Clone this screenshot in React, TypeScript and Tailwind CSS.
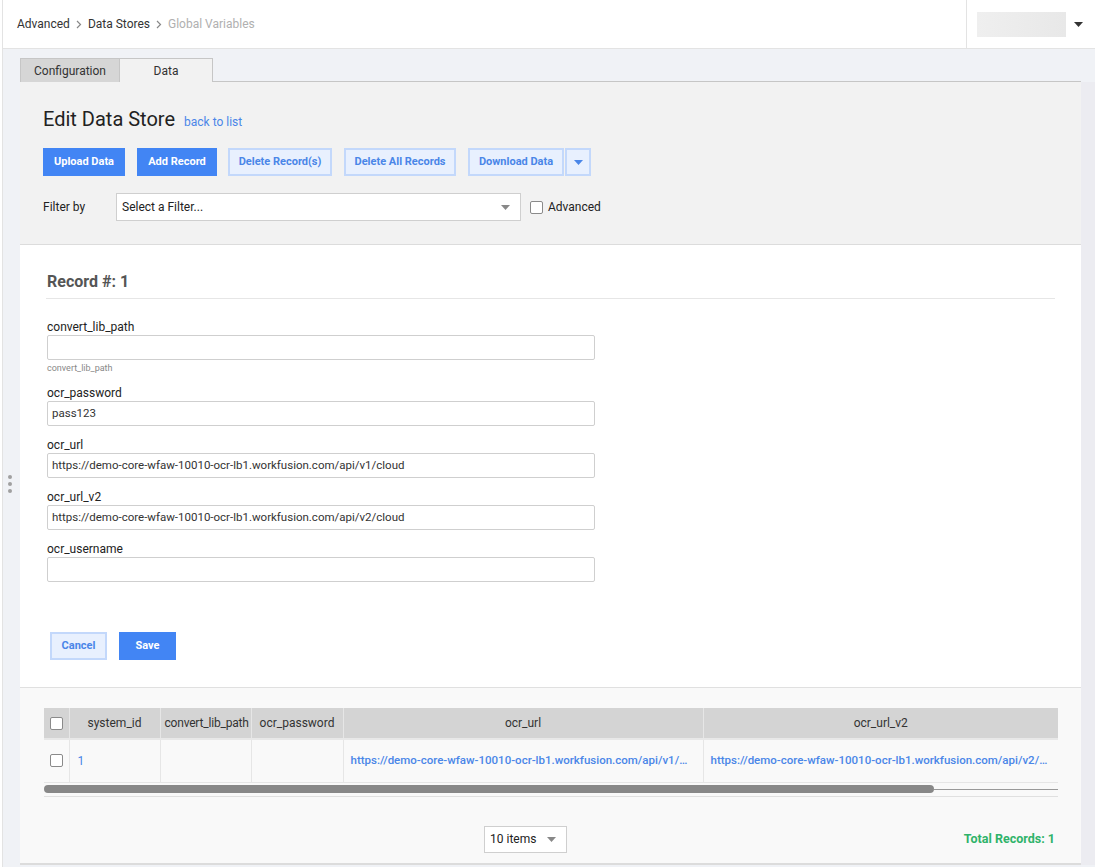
import React from 'react'

const fields = [
  { name: 'convert_lib_path', value: '', hint: 'convert_lib_path' },
  { name: 'ocr_password', value: 'pass123' },
  { name: 'ocr_url', value: 'https://demo-core-wfaw-10010-ocr-lb1.workfusion.com/api/v1/cloud' },
  { name: 'ocr_url_v2', value: 'https://demo-core-wfaw-10010-ocr-lb1.workfusion.com/api/v2/cloud' },
  { name: 'ocr_username', value: '' },
]

function Chevron() {
  return (
    <svg width="6" height="9" viewBox="0 0 6 9" className="mx-[6px] shrink-0">
      <path d="M1 1l3.5 3.5L1 8" fill="none" stroke="#888" strokeWidth="1.2" />
    </svg>
  )
}

function Caret({ color = '#888' }: { color?: string }) {
  return (
    <svg width="9" height="5" viewBox="0 0 9 5" className="shrink-0 block">
      <path d="M0 0h9L4.5 5z" fill={color} />
    </svg>
  )
}

function Box() {
  return <span className="block w-[13px] h-[13px] border border-[#8a8a8a] bg-white rounded-[2px]" />
}

const primary = 'h-[28px] bg-[#4285f4] text-white text-[11px] font-bold whitespace-nowrap shrink-0'
const light = 'h-[28px] bg-[#e8f0fe] text-[#4a86e8] text-[11px] font-bold whitespace-nowrap border-2 border-[#c3d8fb] shrink-0'

export default function App() {
  return (
    <div className="w-[1095px] h-[867px] overflow-hidden bg-white font-['Roboto',sans-serif] text-[#222]">
      <div className="ml-[2px] h-full border-l border-[#e3e3e3] bg-[#f0f2f6]">
        {/* top bar */}
        <header className="h-[49px] bg-white border-b border-[#e3e3e3] flex">
          <div className="flex-1 flex items-center pl-[14px] text-[12px]">
            <span className="text-[#333]">Advanced</span>
            <Chevron />
            <span className="text-[#333]">Data Stores</span>
            <Chevron />
            <span className="text-[#b0b0b0]">Global Variables</span>
          </div>
          <div className="w-[129px] border-l border-[#e3e3e3] flex items-center pl-[10px]">
            <div className="w-[89px] h-[25px] bg-gradient-to-r from-[#efefef] to-[#e8e8e8]" />
            <span className="ml-[8px]"><Caret color="#333" /></span>
          </div>
        </header>

        <div className="flex">
          <div className="w-[17px] relative">
            <div className="absolute left-[5px] top-[426px] flex flex-col gap-[3px]">
              <span className="w-[4px] h-[4px] rounded-full bg-[#a0a0a0]" />
              <span className="w-[4px] h-[4px] rounded-full bg-[#a0a0a0]" />
              <span className="w-[4px] h-[4px] rounded-full bg-[#a0a0a0]" />
            </div>
          </div>

          <div className="w-[1061px] pt-[9px]">
            {/* tabs */}
            <div className="flex h-[24px] text-[12px]">
              <div className="w-[100px] bg-[#d6d6d6] border border-b-0 border-[#c6c6c6] flex items-center justify-center text-[#333]">Configuration</div>
              <div className="w-[93px] bg-[#f2f2f2] border-t border-r border-[#c6c6c6] flex items-center justify-center text-[#333]">Data</div>
              <div className="flex-1 border-b border-[#c6c6c6]" />
            </div>

            {/* top section */}
            <section className="bg-[#f2f2f2] border-b border-[#dcdcdc] pt-[25px] pb-[23px] pl-[23px]">
              <div className="flex items-baseline gap-[9px]">
                <h1 className="text-[20px] leading-[24px] text-[#222]">Edit Data Store</h1>
                <span className="text-[12px] text-[#4a86e8]">back to list</span>
              </div>
              <div className="flex mt-[17px]">
                <button className={primary + ' w-[82px]'}>Upload Data</button>
                <button className={primary + ' w-[80px] ml-[12px]'}>Add Record</button>
                <button className={light + ' w-[104px] ml-[11px]'}>Delete Record(s)</button>
                <button className={light + ' w-[112px] ml-[12px]'}>Delete All Records</button>
                <button className={light + ' w-[96px] ml-[12px]'}>Download Data</button>
                <button className={light + ' w-[26px] ml-[1px] flex items-center justify-center'}><Caret color="#4a86e8" /></button>
              </div>
              <div className="flex items-center mt-[17px] text-[12px]">
                <span className="w-[73px] text-[#222]">Filter by</span>
                <div className="w-[405px] h-[28px] bg-white border border-[#cfcfcf] flex items-center justify-between pl-[5px] pr-[10px]">
                  <span>Select a Filter...</span>
                  <Caret />
                </div>
                <label className="flex items-center ml-[9px] gap-[5px]">
                  <Box />
                  <span>Advanced</span>
                </label>
              </div>
            </section>

            {/* record form */}
            <section className="bg-white pt-[25px] pb-[27px] px-[26px]">
              <h2 className="text-[16px] font-bold text-[#555] pl-[1px] pb-[4px] border-b border-[#e6e6e6]">Record #: 1</h2>
              <div className="w-[549px] pt-[20px] pl-[1px]">
                {fields.map(f => (
                  <div key={f.name} className="mb-[11px]">
                    <div className="text-[12px] leading-[16px]">{f.name}</div>
                    <div className="h-[25px] border border-[#cfcfcf] rounded-[2px] flex items-center px-[4px] text-[11.5px] text-[#333] whitespace-nowrap">{f.value}</div>
                    {f.hint && <div className="text-[9px] leading-[12px] mt-[2px] text-[#888] mb-[2px]">{f.hint}</div>}
                  </div>
                ))}
              </div>
              <div className="flex gap-[12px] mt-[50px] ml-[4px]">
                <button className={light + ' w-[57px]'}>Cancel</button>
                <button className={primary + ' w-[57px]'}>Save</button>
              </div>
            </section>

            {/* table */}
            <section className="bg-[#f9f9f9] border-t border-[#e0e0e0] pt-[20px] pl-[24px] pr-[23px] h-[178px] border-b-2 border-b-[#dcdcdc]">
              <table className="w-[1014px] table-fixed border-collapse text-[12px]">
                <colgroup>
                  <col className="w-[25px]" />
                  <col className="w-[91px]" />
                  <col className="w-[91px]" />
                  <col className="w-[92px]" />
                  <col className="w-[360px]" />
                  <col className="w-[355px]" />
                </colgroup>
                <thead>
                  <tr className="h-[31px] bg-[#d4d4d4] text-[#333] border-b-2 border-[#e8e8e8]">
                    <th className="border-r border-[#e6e6e6] pl-[6px]"><Box /></th>
                    <th className="font-normal border-r border-[#e6e6e6]">system_id</th>
                    <th className="font-normal border-r border-[#e6e6e6] text-left pl-[4px] whitespace-nowrap overflow-hidden tracking-[-0.2px]">convert_lib_path</th>
                    <th className="font-normal border-r border-[#e6e6e6]">ocr_password</th>
                    <th className="font-normal border-r border-[#e6e6e6]">ocr_url</th>
                    <th className="font-normal">ocr_url_v2</th>
                  </tr>
                </thead>
                <tbody>
                  <tr className="h-[43px] border-b border-[#e6e6e6] text-[11.5px] font-medium text-[#4a86e8]">
                    <td className="border-r border-[#e6e6e6] pl-[6px]"><Box /></td>
                    <td className="border-r border-[#e6e6e6] pl-[8px] text-[12px] font-normal">1</td>
                    <td className="border-r border-[#e6e6e6]" />
                    <td className="border-r border-[#e6e6e6]" />
                    <td className="border-r border-[#e6e6e6] pl-[7px] pr-[12px] whitespace-nowrap overflow-hidden text-ellipsis">https://demo-core-wfaw-10010-ocr-lb1.workfusion.com/api/v1/cloud</td>
                    <td className="pl-[7px] pr-[6px] whitespace-nowrap overflow-hidden text-ellipsis">https://demo-core-wfaw-10010-ocr-lb1.workfusion.com/api/v2/cloud</td>
                  </tr>
                </tbody>
              </table>
              <div className="w-[1014px] h-[14px] border-b border-[#e0e0e0] flex items-center">
                <div className="w-[890px] h-[8px] rounded-full bg-[#888]" />
                <div className="flex-1 h-px bg-[#999]" />
              </div>
              <div className="flex items-center mt-[29px] w-[1011px]">
                <div className="ml-[440px] w-[83px] h-[27px] bg-white border border-[#cfcfcf] flex items-center justify-between pl-[5px] pr-[10px] text-[12px]">
                  <span>10 items</span>
                  <Caret />
                </div>
                <span className="ml-auto text-[12.5px] font-bold text-[#2fb36a]">Total Records: 1</span>
              </div>
            </section>
          </div>

          <div className="w-[14px] mt-[33px] bg-[#ececf1]" />
        </div>
      </div>
    </div>
  )
}
